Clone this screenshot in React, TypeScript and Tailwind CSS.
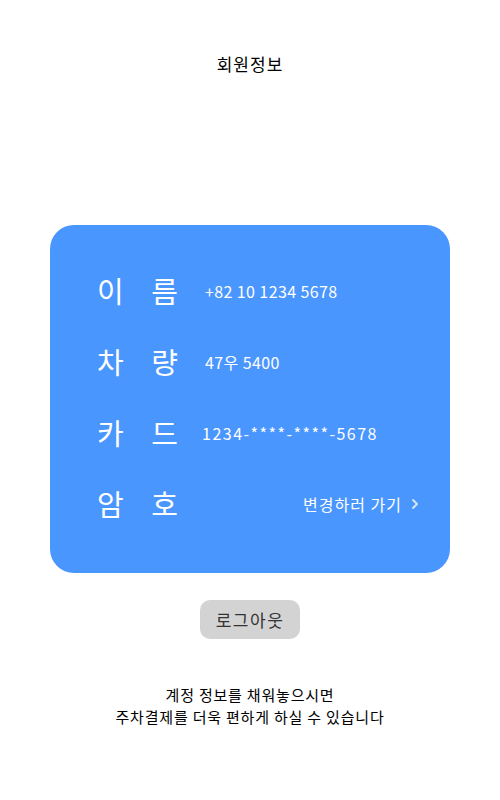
import React from 'react';

const rows = [
  { label: ['이', '름'], value: '+82 10 1234 5678' },
  { label: ['차', '량'], value: '47우 5400' },
  { label: ['카', '드'], value: '1234-****-****-5678', tight: true },
];

const MemberInfo: React.FC = () => {
  return (
    <div className="w-[500px] h-[800px] bg-white flex flex-col items-center font-['Noto_Sans_CJK_KR','Noto_Sans',sans-serif]">
      <h1 className="mt-[52px] text-[17px] leading-[24px] tracking-[1px] text-black">회원정보</h1>

      {/* Card */}
      <div className="mt-[149px] w-[400px] h-[348px] bg-[#4a96ff] rounded-[24px] px-[47px] pt-[30px] flex flex-col text-white">
        {rows.map((r) => (
          <div key={r.value} className="h-[71px] flex items-center">
            <div className="w-[81px] flex justify-between text-[29px] leading-none">
              <span>{r.label[0]}</span>
              <span>{r.label[1]}</span>
            </div>
            <span className={`text-[16px] ${r.tight ? 'ml-[24px] tracking-[1.5px]' : 'ml-[27px] tracking-[0.4px]'}`}>{r.value}</span>
          </div>
        ))}
        <div className="h-[71px] flex items-center">
          <div className="w-[81px] flex justify-between text-[29px] leading-none">
            <span>암</span>
            <span>호</span>
          </div>
          <button className="ml-auto mr-[-17px] flex items-center gap-[8px] text-[16px] tracking-[1px] text-white">
            변경하러 가기
            <svg width="10" height="14" viewBox="0 0 10 14" fill="none">
              <path d="M3 3l4 4-4 4" stroke="#dfe6f0" strokeWidth="1.8" strokeLinecap="round" strokeLinejoin="round" />
            </svg>
          </button>
        </div>
      </div>

      <button className="mt-[27px] w-[100px] h-[39px] rounded-[10px] bg-[#d3d3d3] text-[17px] tracking-[1.5px] text-[#333]">
        로그아웃
      </button>

      <p className="mt-[45px] text-center text-[15px] leading-[22px] tracking-[0.8px] text-black">
        계정 정보를 채워놓으시면
        <br />
        주차결제를 더욱 편하게 하실 수 있습니다
      </p>
    </div>
  );
};

export default function App() {
  return <MemberInfo />;
}
